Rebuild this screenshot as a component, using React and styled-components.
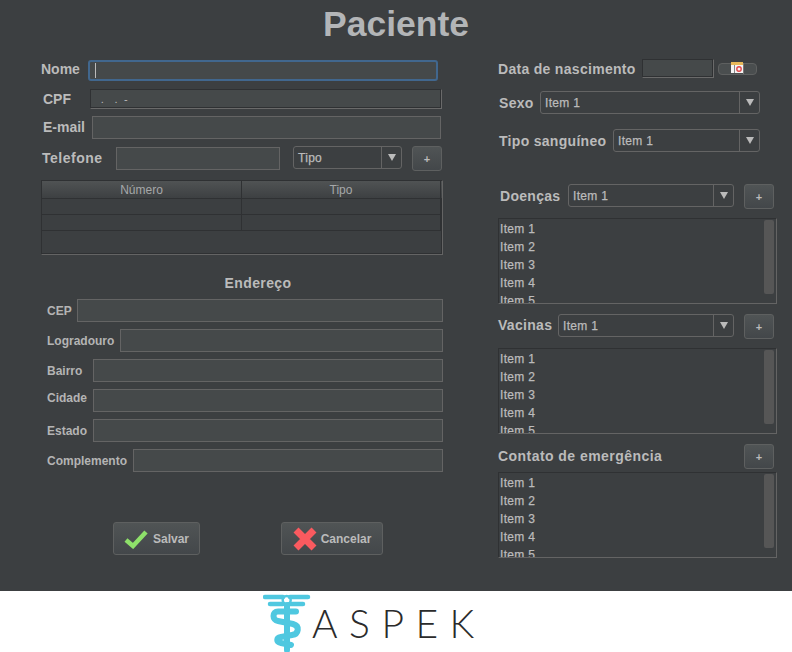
import React from 'react'
import styled, { createGlobalStyle } from 'styled-components'

const GlobalStyle = createGlobalStyle`
  html, body {
    margin: 0;
    padding: 0;
    background: #fff;
  }
  * {
    box-sizing: border-box;
  }
`

const Page = styled.div`
  width: 792px;
  height: 652px;
  display: flex;
  flex-direction: column;
  font-family: 'Liberation Sans', Arial, sans-serif;
  color: #bbbbbb;
`

const Main = styled.main`
  height: 591px;
  background: #3c3f41;
`

const Title = styled.h1`
  height: 46px;
  margin: 0;
  text-align: center;
  font-size: 35.5px;
  line-height: 48px;
  font-weight: bold;
  color: #b3b5b7;
`

const Columns = styled.div`
  display: grid;
  grid-template-columns: 402px 279px;
  column-gap: 55px;
  padding-left: 41px;
`

const Column = styled.section`
  display: flex;
  flex-direction: column;
`

const Row = styled.div`
  display: flex;
  align-items: ${(p) => p.$align || 'center'};
  height: ${(p) => p.$height}px;
  margin-top: ${(p) => p.$top}px;
  padding-left: ${(p) => p.$left || 0}px;
  padding-right: ${(p) => p.$right || 0}px;
`

const Label = styled.label`
  flex: none;
  width: ${(p) => p.$width}px;
  font-size: 14px;
  font-weight: bold;
  white-space: nowrap;
  letter-spacing: ${(p) => p.$spacing || 0}px;
  margin-top: ${(p) => p.$shift || 0}px;
`

const SmallLabel = styled.label`
  flex: none;
  width: ${(p) => p.$width}px;
  font-size: 12px;
  font-weight: bold;
  white-space: nowrap;
  color: #b4b4b4;
  margin-top: ${(p) => p.$shift || 0}px;
`

const Field = styled.div`
  flex: ${(p) => (p.$width ? 'none' : 1)};
  width: ${(p) => (p.$width ? `${p.$width}px` : 'auto')};
  height: ${(p) => p.$height || 23}px;
  margin-top: ${(p) => p.$shift || 0}px;
  background: #45494a;
  border: 1px solid #646464;
`

const FocusField = styled(Field)`
  display: flex;
  align-items: center;
  padding-left: 5px;
  border: 2px solid #41678e;
  border-radius: 3px;
`

const Caret = styled.span`
  width: 1px;
  height: 15px;
  background: #bbbbbb;
`

const MaskedField = styled(Field)`
  padding: 2px 0 0 5px;
  border-color: #2f3133 #6a6a6a #6a6a6a #2f3133;
  box-shadow: inset -1px -1px 0 #2f3133;
  font-size: 11px;
  line-height: 14px;
  letter-spacing: 1.6px;
  white-space: pre;
`

const Combo = styled.div`
  flex: none;
  display: flex;
  width: ${(p) => p.$width}px;
  height: 23px;
  border: 1px solid #646464;
  border-radius: 3px;
  background: #3c3f41;
`

const ComboText = styled.span`
  flex: 1;
  padding-left: 4px;
  font-size: 12px;
  letter-spacing: 0.3px;
  line-height: 22px;
  -webkit-text-stroke: 0.25px #bbbbbb;
`

const ComboArrow = styled.span`
  flex: none;
  width: 20px;
  display: flex;
  align-items: center;
  justify-content: center;
  border-left: 1px solid #646464;

  &::after {
    content: '';
    border-left: 4px solid transparent;
    border-right: 4px solid transparent;
    border-top: 7px solid #bbbbbb;
  }
`

const Button = styled.button`
  flex: none;
  display: flex;
  align-items: center;
  justify-content: center;
  padding: 0;
  font-family: inherit;
  color: #bbbbbb;
  border: 1px solid #5e6060;
  border-radius: 3px;
  background: linear-gradient(#505455, #43474a);
`

const PlusButton = styled(Button)`
  width: 30px;
  height: 25px;
  margin-left: ${(p) => p.$gap ?? 10}px;
  font-size: 11px;
  font-weight: bold;
`

const CalendarButton = styled(Button)`
  width: 39px;
  height: 12px;
  margin-left: 4px;
  border-radius: 4px;
  background: #4a4e4f;
  overflow: visible;
`

const Table = styled.div`
  height: 75px;
  margin-top: 9px;
  border: 1px solid #2f3133;
  border-right-color: #646464;
  border-bottom-color: #646464;
  box-shadow: inset -1px -1px 0 #2f3133;
`

const TableRow = styled.div`
  display: grid;
  grid-template-columns: 200px 199px;
  height: ${(p) => (p.$head ? 18 : 16)}px;
  border-bottom: 1px solid #2f3133;
  background: ${(p) => (p.$head ? 'linear-gradient(#505354, #3d4042)' : 'transparent')};
`

const TableCell = styled.div`
  font-size: 12px;
  line-height: 19px;
  text-align: center;
  color: #a6a8a9;
  border-right: 1px solid #2f3133;
`

const SectionTitle = styled.h2`
  height: 16px;
  margin: 20px 0 0;
  padding-left: 32px;
  text-align: center;
  font-size: 14px;
  line-height: 16px;
  font-weight: bold;
  letter-spacing: 0.4px;
`

const Actions = styled.div`
  display: flex;
  gap: 81px;
  margin-top: 50px;
  padding-left: 72px;
`

const ActionButton = styled(Button)`
  width: ${(p) => p.$width}px;
  height: 33px;
  gap: ${(p) => p.$gap}px;
  font-size: 12px;
  font-weight: bold;
`

const ListBox = styled.div`
  display: flex;
  height: 86px;
  margin-top: ${(p) => p.$top}px;
  border: 1px solid #2f3133;
  border-right-color: #646464;
  border-bottom-color: #646464;
  overflow: hidden;
`

const ListItems = styled.ul`
  flex: 1;
  margin: 0;
  padding: 1px 0 0 1px;
  list-style: none;
  font-size: 12px;
  line-height: 18px;
  letter-spacing: 0.3px;
  -webkit-text-stroke: 0.25px #bbbbbb;
`

const ScrollThumb = styled.div`
  flex: none;
  width: 10px;
  height: 74px;
  margin: 1px 2px 0 0;
  border-radius: 2px;
  background: #565656;
`

const Footer = styled.footer`
  flex: 1;
  display: flex;
  align-items: flex-start;
  padding: 2px 0 0 263px;
  background: #ffffff;
`

const Wordmark = styled.span`
  margin: 6px 0 0 1px;
  font-family: Lato, 'Open Sans', sans-serif;
  font-size: 39px;
  line-height: 48px;
  font-weight: 300;
  letter-spacing: 11.5px;
  color: #2b2b2b;
`

const Combobox = ({ text, width }) => (
  <Combo $width={width}>
    <ComboText>{text}</ComboText>
    <ComboArrow />
  </Combo>
)

const ItemList = ({ top }) => (
  <ListBox $top={top}>
    <ListItems>
      {[1, 2, 3, 4, 5].map((n) => (
        <li key={n}>Item {n}</li>
      ))}
    </ListItems>
    <ScrollThumb />
  </ListBox>
)

const CalendarIcon = () => (
  <svg width='13' height='12' viewBox='0 0 13 12' style={{ marginTop: -2 }}>
    <rect x='0' y='0' width='12' height='11' fill='#f4f4f4' />
    <rect x='0' y='0' width='12' height='3' fill='#e8b95a' />
    <rect x='3' y='3' width='1' height='8' fill='#888' />
    <circle cx='8' cy='7' r='2.2' fill='none' stroke='#e2474a' strokeWidth='1.4' />
    <rect x='12' y='1' width='1' height='11' fill='#777' />
  </svg>
)

const CheckIcon = () => (
  <svg width='24' height='20' viewBox='0 0 24 20'>
    <path d='M2 11 L9 17 L22 3' fill='none' stroke='#8ee06a' strokeWidth='4.5' />
  </svg>
)

const CrossIcon = () => (
  <svg width='24' height='24' viewBox='0 0 24 24'>
    <path d='M3 3 L21 21 M21 3 L3 21' fill='none' stroke='#fa5a5f' strokeWidth='7' />
  </svg>
)

const LogoMark = () => (
  <svg width='48' height='59' viewBox='0 0 48 59'>
    <g fill='none' stroke='#4fc8e0' strokeLinecap='round'>
      <path d='M2 4 H20 M27 4 H45 M7 11 H20 M27 11 H40' strokeWidth='4.5' />
      <circle cx='23.7' cy='7' r='4' strokeWidth='2.5' />
      <path d='M24 12 V57' strokeWidth='6' />
      <path
        d='M33 18.5 H15 C9 18.5 9 27 15 28 L30 31 C37 33 36 41 29 42 L18 44 C13 45 13 49 18 50 L28 52'
        strokeWidth='6'
      />
    </g>
  </svg>
)

const AddressRow = ({ label, width, top, shift }) => (
  <Row $height={23} $top={top} $left={6}>
    <SmallLabel $width={width} $shift={shift}>
      {label}
    </SmallLabel>
    <Field />
  </Row>
)

const App = () => {
  return (
    <Page>
      <GlobalStyle />
      <Main>
        <Title>Paciente</Title>
        <Columns>
          <Column>
            <Row $height={21} $top={14} $right={5}>
              <Label $width={47} $shift={-3}>
                Nome
              </Label>
              <FocusField $height={21}>
                <Caret />
              </FocusField>
            </Row>
            <Row $height={20} $top={8} $left={2} $right={1}>
              <Label $width={47}>CPF</Label>
              <MaskedField $height={20}>{' .  . -'}</MaskedField>
            </Row>
            <Row $height={23} $top={7} $left={2} $right={2}>
              <Label $width={49} $shift={-1}>
                E-mail
              </Label>
              <Field />
            </Row>
            <Row $height={25} $top={7} $left={1} $align='flex-start'>
              <Label $width={74} $shift={4} $spacing={0.5}>
                Telefone
              </Label>
              <Field $width={164} $shift={1} />
              <div style={{ width: 13 }} />
              <Combobox text='Tipo' width={109} />
              <PlusButton>+</PlusButton>
            </Row>
            <Table>
              <TableRow $head>
                <TableCell>Número</TableCell>
                <TableCell>Tipo</TableCell>
              </TableRow>
              <TableRow>
                <TableCell />
                <TableCell />
              </TableRow>
              <TableRow>
                <TableCell />
                <TableCell />
              </TableRow>
            </Table>
            <SectionTitle>Endereço</SectionTitle>
            <AddressRow label='CEP' width={30} top={8} />
            <AddressRow label='Logradouro' width={73} top={7} />
            <AddressRow label='Bairro' width={46} top={7} />
            <AddressRow label='Cidade' width={46} top={7} shift={-6} />
            <AddressRow label='Estado' width={46} top={7} />
            <AddressRow label='Complemento' width={86} top={7} />
            <Actions>
              <ActionButton $width={87} $gap={5}>
                <CheckIcon />
                Salvar
              </ActionButton>
              <ActionButton $width={102} $gap={4}>
                <CrossIcon />
                Cancelar
              </ActionButton>
            </Actions>
          </Column>
          <Column>
            <Row $height={19} $top={13}>
              <Label $width={144} $spacing={0.3}>
                Data de nascimento
              </Label>
              <MaskedField $width={72} $height={19} />
              <CalendarButton>
                <CalendarIcon />
              </CalendarButton>
            </Row>
            <Row $height={23} $top={13} $left={1}>
              <Label $width={41} $spacing={0.3}>
                Sexo
              </Label>
              <Combobox text='Item 1' width={220} />
            </Row>
            <Row $height={23} $top={15} $left={1}>
              <Label $width={114} $spacing={0.3}>
                Tipo sanguíneo
              </Label>
              <Combobox text='Item 1' width={147} />
            </Row>
            <Row $height={25} $top={32} $left={2} $align='flex-start'>
              <Label $width={68} $spacing={0.3} $shift={4}>
                Doenças
              </Label>
              <Combobox text='Item 1' width={166} />
              <PlusButton>+</PlusButton>
            </Row>
            <ItemList top={9} />
            <Row $height={25} $top={10} $align='flex-start'>
              <Label $width={60} $spacing={0.3} $shift={3}>
                Vacinas
              </Label>
              <Combobox text='Item 1' width={176} />
              <PlusButton>+</PlusButton>
            </Row>
            <ItemList top={9} />
            <Row $height={25} $top={10}>
              <Label $width={246} $spacing={0.45} $shift={-1}>
                Contato de emergência
              </Label>
              <PlusButton $gap={0}>+</PlusButton>
            </Row>
            <ItemList top={3} />
          </Column>
        </Columns>
      </Main>
      <Footer>
        <LogoMark />
        <Wordmark>ASPEK</Wordmark>
      </Footer>
    </Page>
  )
}

export default App
